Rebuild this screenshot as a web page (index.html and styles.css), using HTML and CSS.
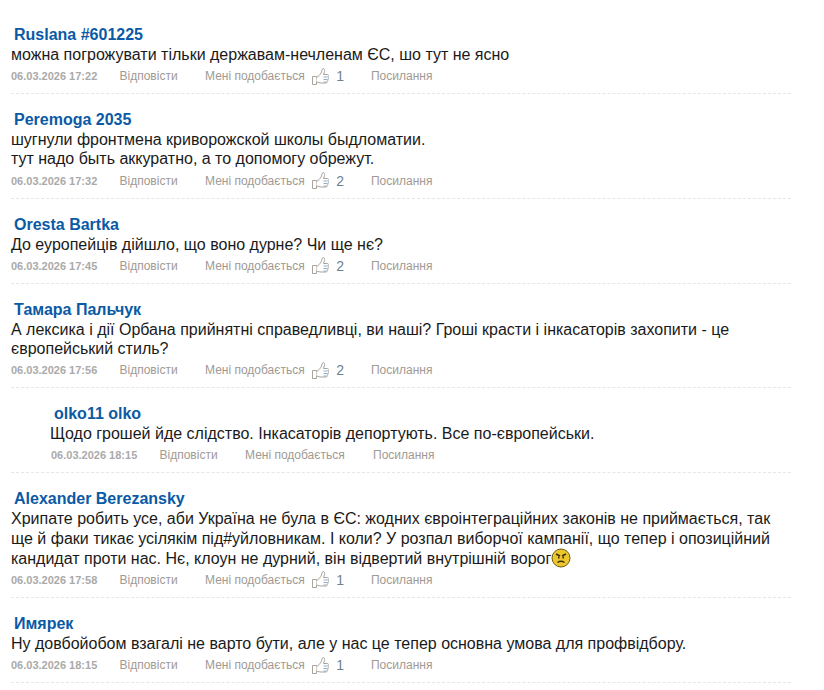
FILE: index.html
```html
<!DOCTYPE html>
<html>
	<head>
		<meta http-equiv="Content-Type" content="text/html; charset=UTF-8">
		<title>Коментарі</title>
		<link rel="stylesheet" href="styles.css">
	</head>
	<body>
		<svg class="svg-defs" width="0" height="0">
			<symbol id="thumb" viewBox="0 0 17 17">
				<path d="M0.5 8.5h4v8h-4z" fill="none" stroke="#a9a39d"/>
				<path d="M4.5 9.5c2 -1 4 -3 5 -5.500c0.500 -1.500 0.500 -3 1.500 -3.500c1.500 0 2 1.500 1.500 3c-0.200 1 -0.800 2 -1 3h4c1 0 1.300 1.500 0.500 2c0.800 0.500 0.800 2 -0.200 2.500c0.500 0.600 0.300 1.800 -0.600 2.200c0.300 0.800 -0.200 1.800 -1.200 1.800h-5c-1.500 0 -2.500 -0.500 -4.500 -1" fill="#fff" stroke="#a9a39d"/>
				<path d="M11.500 9h4M11.500 11.500h4M11.500 14h3" stroke="#8fb0c8" fill="none"/>
			</symbol>
		</svg>
		<div class="comments">
			<div class="comment">
				<div class="comment-name">Ruslana #601225</div>
				<div class="comment-text">можна погрожувати тільки державам-нечленам ЄС, шо тут не ясно</div>
				<div class="comment-meta">
					<span class="meta-date">06.03.2026 17:22</span>
					<a class="meta-link meta-reply">Відповісти</a>
					<a class="meta-link meta-like">Мені подобається</a>
					<svg class="thumb"><use href="#thumb"/></svg>
					<span class="like-count">1</span>
					<a class="meta-link meta-share">Посилання</a>
				</div>
			</div>
			<div class="comment">
				<div class="comment-name">Peremoga 2035</div>
				<div class="comment-text">шугнули фронтмена криворожской школы быдломатии.<br>тут надо быть аккуратно, а то допомогу обрежут.</div>
				<div class="comment-meta">
					<span class="meta-date">06.03.2026 17:32</span>
					<a class="meta-link meta-reply">Відповісти</a>
					<a class="meta-link meta-like">Мені подобається</a>
					<svg class="thumb"><use href="#thumb"/></svg>
					<span class="like-count">2</span>
					<a class="meta-link meta-share">Посилання</a>
				</div>
			</div>
			<div class="comment">
				<div class="comment-name">Oresta Bartka</div>
				<div class="comment-text">До еуропейців дійшло, що воно дурне? Чи ще нє?</div>
				<div class="comment-meta">
					<span class="meta-date">06.03.2026 17:45</span>
					<a class="meta-link meta-reply">Відповісти</a>
					<a class="meta-link meta-like">Мені подобається</a>
					<svg class="thumb"><use href="#thumb"/></svg>
					<span class="like-count">2</span>
					<a class="meta-link meta-share">Посилання</a>
				</div>
			</div>
			<div class="comment">
				<div class="comment-name">Тамара Пальчук</div>
				<div class="comment-text">А лексика і дії Орбана прийнятні справедливці, ви наші? Гроші красти і інкасаторів захопити - це європейський стиль?</div>
				<div class="comment-meta">
					<span class="meta-date">06.03.2026 17:56</span>
					<a class="meta-link meta-reply">Відповісти</a>
					<a class="meta-link meta-like">Мені подобається</a>
					<svg class="thumb"><use href="#thumb"/></svg>
					<span class="like-count">2</span>
					<a class="meta-link meta-share">Посилання</a>
				</div>
			</div>
			<div class="comment comment-child">
				<div class="comment-name">olko11 olko</div>
				<div class="comment-text">Щодо грошей йде слідство. Інкасаторів депортують. Все по-європейськи.</div>
				<div class="comment-meta">
					<span class="meta-date">06.03.2026 18:15</span>
					<a class="meta-link meta-reply">Відповісти</a>
					<a class="meta-link meta-like">Мені подобається</a>
					<a class="meta-link meta-share">Посилання</a>
				</div>
			</div>
			<div class="comment">
				<div class="comment-name">Alexander Berezansky</div>
				<div class="comment-text">Хрипате робить усе, аби Україна не була в ЄС: жодних євроінтеграційних законів не приймається, так ще й факи тикає усілякім під#уйловникам. І коли? У розпал виборчої кампанії, що тепер і опозиційний кандидат проти нас. Нє, клоун не дурний, він відвертий внутрішній ворог<svg class="smile" viewBox="0 0 20 20"><circle cx="10" cy="10" r="9" fill="#ecc62a" stroke="#6b5a18"/><path d="M5 6l4 2M15 6l-4 2" stroke="#3a3010" stroke-width="1.500" fill="none"/><path d="M7 8.500h1.500v2h-1.500zM11.500 8.500h1.500v2h-1.500z" fill="#3a3010"/><path d="M6.500 14.500c2 -1.500 5 -1.500 7 0" stroke="#3a3010" stroke-width="1.500" fill="none"/></svg></div>
				<div class="comment-meta">
					<span class="meta-date">06.03.2026 17:58</span>
					<a class="meta-link meta-reply">Відповісти</a>
					<a class="meta-link meta-like">Мені подобається</a>
					<svg class="thumb"><use href="#thumb"/></svg>
					<span class="like-count">1</span>
					<a class="meta-link meta-share">Посилання</a>
				</div>
			</div>
			<div class="comment">
				<div class="comment-name">Имярек</div>
				<div class="comment-text">Ну довбойобом взагалі не варто бути, але у нас це тепер основна умова для профвідбору.</div>
				<div class="comment-meta">
					<span class="meta-date">06.03.2026 18:15</span>
					<a class="meta-link meta-reply">Відповісти</a>
					<a class="meta-link meta-like">Мені подобається</a>
					<svg class="thumb"><use href="#thumb"/></svg>
					<span class="like-count">1</span>
					<a class="meta-link meta-share">Посилання</a>
				</div>
			</div>
		</div>
	</body>
</html>
```

FILE: styles.css
```css
body{margin: 0px; background: #fff; font-family: "Liberation Sans", Arial, sans-serif; color: #1a1a1a;}
.svg-defs{position: absolute;}
.comments{width: 780px; margin-left: 11px; padding-top: 9px;}
.comment{border-bottom: 1px dashed #e6e6e6; padding: 16px 0px 6px 0px;}
.comment-child{padding-left: 40px;}
.comment-name{margin-left: 3px; font-size: 16px; font-weight: bold; line-height: 20px; color: #0a5aa5;}
.comment-text{font-size: 16px; line-height: 1.2;}
.comment-meta{display: flex; align-items: center; height: 22px; margin-top: 1px; font-size: 12px; color: #a09a94;}
.meta-date{width: 108.5px; font-size: 11px; font-weight: bold; color: #aaa;}
.meta-reply{width: 85.5px;}
.meta-share{margin-left: 27px;}
.thumb{width: 17px; height: 17px; margin-left: 7px;}
.like-count{margin-left: 7.5px; font-size: 14px; color: #6d7f90;}
.comment-child .comment-text{margin-left: -1px;}
.comment-child .meta-like{width: 128px;}
.comment-child .meta-share{margin-left: 0px;}
.smile{width: 20px; height: 20px; vertical-align: -4px;}
```
